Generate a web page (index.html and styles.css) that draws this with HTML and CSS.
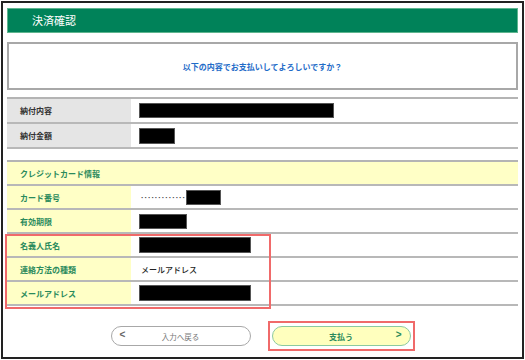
FILE: index.html
```html
<!DOCTYPE html>
<html lang="ja">
<head>
<meta charset="utf-8">
<link rel="stylesheet" href="styles.css">
</head>
<body>
<div class="frame">
  <div class="header"><span>決済確認</span></div>
  <div class="message">以下の内容でお支払いしてよろしいですか？</div>

  <div class="table gray">
    <div class="row"><div class="label">納付内容</div><div class="value"><span class="redact" style="width:195px"></span></div></div>
    <div class="row"><div class="label">納付金額</div><div class="value"><span class="redact tall" style="width:36px"></span></div></div>
  </div>

  <div class="table yellow">
    <div class="section">クレジットカード情報</div>
    <div class="row"><div class="label">カード番号</div><div class="value"><span class="dots">·············</span><span class="redact" style="width:35px"></span></div></div>
    <div class="row"><div class="label">有効期限</div><div class="value"><span class="redact" style="width:48px"></span></div></div>
    <div class="row"><div class="label">名義人氏名</div><div class="value"><span class="redact tall" style="width:112px"></span></div></div>
    <div class="row"><div class="label">連絡方法の種類</div><div class="value text">メールアドレス</div></div>
    <div class="row"><div class="label">メールアドレス</div><div class="value"><span class="redact tall" style="width:112px"></span></div></div>
    <div class="highlight"></div>
  </div>

  <div class="buttons">
    <div class="btn back"><span class="arrow">&lt;</span><span class="btn-text">入力へ戻る</span></div>
    <div class="mark">
      <div class="btn pay"><span class="btn-text">支払う</span><span class="arrow">&gt;</span></div>
    </div>
  </div>
</div>
</body>
</html>
```

FILE: styles.css
```css
html, body {
  margin: 0;
  padding: 0;
  background: #fff;
}
body {
  font-family: "Noto Sans CJK JP", "Noto Sans", sans-serif;
  width: 525px;
  height: 360px;
  overflow: hidden;
}
.frame {
  margin: 1px;
  border: 2px solid #222;
  padding: 5px 4px 0 4px;
  box-sizing: content-box;
  width: 511px;
  height: 349px;
}
.header {
  height: 25px;
  background: #008259;
  border: 1px solid #5fb58f;
  box-sizing: border-box;
  display: flex;
  align-items: center;
  padding-left: 24px;
}
.header span {
  color: #fff;
  font-size: 11px;
  line-height: 1;
}
.message {
  margin-top: 9px;
  height: 48px;
  border: 2px solid #a8a8a8;
  box-sizing: border-box;
  display: flex;
  align-items: center;
  justify-content: center;
  color: #1f6cc8;
  font-size: 8px;
  font-weight: bold;
}
.table {
  position: relative;
  border-top: 2px solid #b4b4b4;
}
.gray {
  margin-top: 7px;
}
.yellow {
  margin-top: 11px;
}
.row {
  display: flex;
  height: 23px;
  border-bottom: 2px solid #b8b8b8;
}
.yellow .row {
  height: 22px;
}
.label {
  width: 124px;
  padding-left: 13px;
  box-sizing: border-box;
  display: flex;
  align-items: center;
  font-size: 8px;
  font-weight: bold;
}
.gray .label {
  background: #e5e5e5;
  color: #333;
}
.yellow .label {
  background: #ffffc6;
  color: #2a8a5c;
}
.value {
  flex: 1;
  display: flex;
  align-items: center;
  padding-left: 8px;
}
.value.text {
  padding-left: 10px;
  font-size: 8px;
  font-weight: 500;
  color: #222;
}
.section {
  height: 22px;
  background: #ffffc6;
  border-bottom: 2px solid #b8b8b8;
  color: #2a8a5c;
  font-size: 8px;
  font-weight: bold;
  display: flex;
  align-items: center;
  padding-left: 13px;
}
.redact {
  display: inline-block;
  height: 15px;
  background: #000;
  border: 1px solid #555;
  box-sizing: border-box;
}
.redact.tall {
  height: 16px;
}
.dots {
  font-family: "Liberation Sans", sans-serif;
  font-size: 8px;
  font-weight: bold;
  letter-spacing: 0.8px;
  color: #444;
  padding-left: 2px;
}
.highlight {
  position: absolute;
  left: -2px;
  top: 72px;
  width: 266px;
  height: 75px;
  border: 2px solid #f06a6a;
  box-sizing: border-box;
  pointer-events: none;
}
.buttons {
  display: flex;
  justify-content: center;
  align-items: center;
  gap: 17px;
  margin-top: 15px;
}
.btn {
  height: 20px;
  border-radius: 10px;
  box-sizing: border-box;
  display: flex;
  align-items: center;
  position: relative;
  justify-content: center;
}
.back {
  width: 140px;
  border: 1.5px solid #a8a8a8;
  background: #fff;
  color: #777;
}
.back .arrow {
  position: absolute;
  left: 8px;
  top: 2px;
  font-size: 10px;
  font-weight: bold;
  color: #666;
  font-family: "Liberation Sans", sans-serif;
}
.back .btn-text {
  font-size: 7.5px;
}
.mark {
  border: 2px solid #f06a6a;
  padding: 3px 2px;
}
.pay {
  width: 139px;
  border: 1.5px solid #8ccaa0;
  background: #ffffbe;
  color: #2a8a5c;
}
.pay .btn-text {
  font-size: 8px;
  font-weight: bold;
}
.pay .arrow {
  position: absolute;
  right: 8px;
  top: 2px;
  font-size: 10px;
  font-weight: bold;
  color: #2a8a5c;
  font-family: "Liberation Sans", sans-serif;
}
```
